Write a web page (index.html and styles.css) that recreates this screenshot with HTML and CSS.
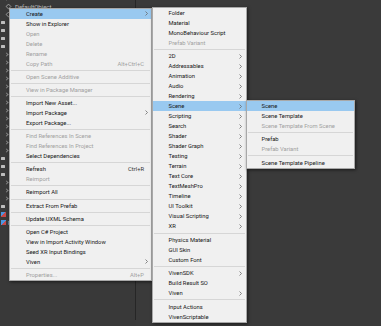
FILE: index.html
```html
<!DOCTYPE html>
<html>
<head>
<meta charset="utf-8">
<link rel="stylesheet" href="styles.css">
</head>
<body>
<div class="screen">
  <div class="tree">
    <div class="row"><span class="chev"></span></div>
    <div class="row"><span class="cube"></span><span class="txt">DefaultObject</span></div>
    <div class="row"><span class="cube"></span></div>
    <div class="row"><span class="folder"></span></div>
    <div class="row"><span class="folder"></span></div>
    <div class="row"><span class="folder"></span></div>
    <div class="row"><span class="folder"></span></div>
    <div class="row"><span class="chev"></span></div>
    <div class="row"><span class="chev"></span></div>
    <div class="row"><span class="chev"></span></div>
    <div class="row"><span class="chev"></span></div>
    <div class="row"><span class="chev"></span></div>
    <div class="row"><span class="chev"></span></div>
    <div class="row"><span class="chev"></span></div>
    <div class="row"><span class="chev"></span></div>
    <div class="row"><span class="chev"></span></div>
    <div class="row"><span class="chev"></span></div>
    <div class="row"><span class="chev"></span></div>
    <div class="row"><span class="chev"></span></div>
    <div class="row"><span class="chev"></span></div>
    <div class="row"><span class="folder"></span></div>
    <div class="row"><span class="folder"></span></div>
    <div class="row"><span class="folder"></span></div>
    <div class="row"><span class="chev"></span></div>
    <div class="row"><span class="chev"></span></div>
    <div class="row"><span class="chev"></span></div>
    <div class="row"><span class="folder"></span></div>
    <div class="row"><span class="pkg"></span></div>
    <div class="row"><span class="pkg"></span><span class="txt clip">Pac</span></div>
  </div>
  <div class="rightpane"></div>

  <div class="menu main">
    <div class="item hl"><span class="label">Create</span><svg class="arrow" viewBox="0 0 3 5"><path d="M0.5 0.5 L2.5 2.5 L0.5 4.5"/></svg></div>
    <div class="item"><span class="label">Show in Explorer</span></div>
    <div class="item dis"><span class="label">Open</span></div>
    <div class="item dis"><span class="label">Delete</span></div>
    <div class="item dis"><span class="label">Rename</span></div>
    <div class="item dis"><span class="label">Copy Path</span><span class="key">Alt+Ctrl+C</span></div>
    <div class="sep"></div>
    <div class="item dis"><span class="label">Open Scene Additive</span></div>
    <div class="sep"></div>
    <div class="item dis"><span class="label">View in Package Manager</span></div>
    <div class="sep"></div>
    <div class="item"><span class="label">Import New Asset...</span></div>
    <div class="item"><span class="label">Import Package</span><svg class="arrow" viewBox="0 0 3 5"><path d="M0.5 0.5 L2.5 2.5 L0.5 4.5"/></svg></div>
    <div class="item"><span class="label">Export Package...</span></div>
    <div class="sep"></div>
    <div class="item dis"><span class="label">Find References In Scene</span></div>
    <div class="item dis"><span class="label">Find References In Project</span></div>
    <div class="item"><span class="label">Select Dependencies</span></div>
    <div class="sep"></div>
    <div class="item"><span class="label">Refresh</span><span class="key">Ctrl+R</span></div>
    <div class="item dis"><span class="label">Reimport</span></div>
    <div class="sep"></div>
    <div class="item"><span class="label">Reimport All</span></div>
    <div class="sep"></div>
    <div class="item"><span class="label">Extract From Prefab</span></div>
    <div class="sep"></div>
    <div class="item"><span class="label">Update UXML Schema</span></div>
    <div class="sep"></div>
    <div class="item"><span class="label">Open C# Project</span></div>
    <div class="item"><span class="label">View in Import Activity Window</span></div>
    <div class="item"><span class="label">Seed XR Input Bindings</span></div>
    <div class="item"><span class="label">Viven</span><svg class="arrow" viewBox="0 0 3 5"><path d="M0.5 0.5 L2.5 2.5 L0.5 4.5"/></svg></div>
    <div class="sep"></div>
    <div class="item dis"><span class="label">Properties...</span><span class="key">Alt+P</span></div>
  </div>

  <div class="menu sub1">
    <div class="item"><span class="label">Folder</span></div>
    <div class="item"><span class="label">Material</span></div>
    <div class="item"><span class="label">MonoBehaviour Script</span></div>
    <div class="item dis"><span class="label">Prefab Variant</span></div>
    <div class="sep"></div>
    <div class="item"><span class="label">2D</span><svg class="arrow" viewBox="0 0 3 5"><path d="M0.5 0.5 L2.5 2.5 L0.5 4.5"/></svg></div>
    <div class="item"><span class="label">Addressables</span><svg class="arrow" viewBox="0 0 3 5"><path d="M0.5 0.5 L2.5 2.5 L0.5 4.5"/></svg></div>
    <div class="item"><span class="label">Animation</span><svg class="arrow" viewBox="0 0 3 5"><path d="M0.5 0.5 L2.5 2.5 L0.5 4.5"/></svg></div>
    <div class="item"><span class="label">Audio</span><svg class="arrow" viewBox="0 0 3 5"><path d="M0.5 0.5 L2.5 2.5 L0.5 4.5"/></svg></div>
    <div class="item"><span class="label">Rendering</span><svg class="arrow" viewBox="0 0 3 5"><path d="M0.5 0.5 L2.5 2.5 L0.5 4.5"/></svg></div>
    <div class="item hl"><span class="label">Scene</span><svg class="arrow" viewBox="0 0 3 5"><path d="M0.5 0.5 L2.5 2.5 L0.5 4.5"/></svg></div>
    <div class="item"><span class="label">Scripting</span><svg class="arrow" viewBox="0 0 3 5"><path d="M0.5 0.5 L2.5 2.5 L0.5 4.5"/></svg></div>
    <div class="item"><span class="label">Search</span><svg class="arrow" viewBox="0 0 3 5"><path d="M0.5 0.5 L2.5 2.5 L0.5 4.5"/></svg></div>
    <div class="item"><span class="label">Shader</span><svg class="arrow" viewBox="0 0 3 5"><path d="M0.5 0.5 L2.5 2.5 L0.5 4.5"/></svg></div>
    <div class="item"><span class="label">Shader Graph</span><svg class="arrow" viewBox="0 0 3 5"><path d="M0.5 0.5 L2.5 2.5 L0.5 4.5"/></svg></div>
    <div class="item"><span class="label">Testing</span><svg class="arrow" viewBox="0 0 3 5"><path d="M0.5 0.5 L2.5 2.5 L0.5 4.5"/></svg></div>
    <div class="item"><span class="label">Terrain</span><svg class="arrow" viewBox="0 0 3 5"><path d="M0.5 0.5 L2.5 2.5 L0.5 4.5"/></svg></div>
    <div class="item"><span class="label">Text Core</span><svg class="arrow" viewBox="0 0 3 5"><path d="M0.5 0.5 L2.5 2.5 L0.5 4.5"/></svg></div>
    <div class="item"><span class="label">TextMeshPro</span><svg class="arrow" viewBox="0 0 3 5"><path d="M0.5 0.5 L2.5 2.5 L0.5 4.5"/></svg></div>
    <div class="item"><span class="label">Timeline</span><svg class="arrow" viewBox="0 0 3 5"><path d="M0.5 0.5 L2.5 2.5 L0.5 4.5"/></svg></div>
    <div class="item"><span class="label">UI Toolkit</span><svg class="arrow" viewBox="0 0 3 5"><path d="M0.5 0.5 L2.5 2.5 L0.5 4.5"/></svg></div>
    <div class="item"><span class="label">Visual Scripting</span><svg class="arrow" viewBox="0 0 3 5"><path d="M0.5 0.5 L2.5 2.5 L0.5 4.5"/></svg></div>
    <div class="item"><span class="label">XR</span><svg class="arrow" viewBox="0 0 3 5"><path d="M0.5 0.5 L2.5 2.5 L0.5 4.5"/></svg></div>
    <div class="sep"></div>
    <div class="item"><span class="label">Physics Material</span></div>
    <div class="item"><span class="label">GUI Skin</span></div>
    <div class="item"><span class="label">Custom Font</span></div>
    <div class="sep"></div>
    <div class="item"><span class="label">VivenSDK</span><svg class="arrow" viewBox="0 0 3 5"><path d="M0.5 0.5 L2.5 2.5 L0.5 4.5"/></svg></div>
    <div class="item"><span class="label">Build Result SO</span></div>
    <div class="item"><span class="label">Viven</span><svg class="arrow" viewBox="0 0 3 5"><path d="M0.5 0.5 L2.5 2.5 L0.5 4.5"/></svg></div>
    <div class="sep"></div>
    <div class="item"><span class="label">Input Actions</span></div>
    <div class="item"><span class="label">VivenScriptable</span></div>
  </div>

  <div class="menu sub2">
    <div class="item hl"><span class="label">Scene</span></div>
    <div class="item"><span class="label">Scene Template</span></div>
    <div class="item dis"><span class="label">Scene Template From Scene</span></div>
    <div class="sep"></div>
    <div class="item"><span class="label">Prefab</span></div>
    <div class="item dis"><span class="label">Prefab Variant</span></div>
    <div class="sep"></div>
    <div class="item"><span class="label">Scene Template Pipeline</span></div>
  </div>
</div>
</body>
</html>
```
FILE: styles.css
```css
html, body {
  margin: 0;
  padding: 0;
}
body {
  background: #383838;
  font-family: Roboto, "Noto Sans", "Noto Sans CJK KR", sans-serif;
}
.screen {
  position: relative;
  width: 381px;
  height: 326px;
  overflow: hidden;
  display: flex;
  background: #393939;
}
.tree {
  width: 136px;
  height: 100%;
  border-right: 1px solid #262626;
  display: flex;
  flex-direction: column;
  margin-top: -6px;
  box-sizing: border-box;
}
.row {
  height: 8px;
  flex: none;
  display: flex;
  align-items: center;
  gap: 2px;
  padding-left: 1px;
  color: #c4c4c4;
  font-size: 6px;
  white-space: nowrap;
}
.row .chev {
  width: 2px;
  height: 2px;
  border-right: 1px solid #8a8a8a;
  border-bottom: 1px solid #8a8a8a;
  transform: rotate(-45deg);
  margin-left: 4px;
}
.row .folder {
  width: 4px;
  height: 3px;
  background: #bdbdbd;
  border-radius: 0.5px;
}
.row .cube {
  width: 3px;
  height: 3px;
  margin-left: 5px;
  border: 1px solid #a8a8a8;
  transform: rotate(45deg) scale(0.85);
}
.row .pkg {
  width: 5px;
  height: 5px;
  background: linear-gradient(135deg, #4a96e0 50%, #c84848 50%);
}
.row .txt {
  margin-left: 2px;
}
.row .txt.clip {
  margin-left: 0;
}
.rightpane {
  flex: 1;
  background: #3a3a3a;
}

.menu {
  position: absolute;
  background: #f0f0f0;
  border: 1px solid #a8a8a8;
  box-shadow: 1px 1px 3px rgba(0, 0, 0, 0.55);
  display: flex;
  flex-direction: column;
  box-sizing: border-box;
  font-size: 5.8px;
  color: #161616;
}
.main {
  left: 9px;
  top: 7.5px;
  width: 143px;
}
.sub1 {
  left: 152px;
  top: 7px;
  width: 95px;
}
.sub2 {
  left: 246px;
  top: 100px;
  width: 109px;
}
.item {
  height: 10px;
  flex: none;
  display: flex;
  align-items: center;
  white-space: nowrap;
  padding-right: 3px;
}
.main .item { padding-left: 16px; }
.sub1 .item { padding-left: 15.5px; padding-right: 4px; }
.sub2 .item { padding-left: 14.5px; }
.item .label {
  flex: 1;
}
.item.hl {
  background: #99c9f0;
}
.item.dis {
  color: #a0a0a0;
}
.key {
  margin-right: 4px;
  color: #333;
}
.item.dis .key {
  color: #a0a0a0;
}
.arrow {
  width: 3px;
  height: 5px;
  fill: none;
  stroke: #6a6a6a;
  stroke-width: 0.8;
}
.sep {
  height: 1px;
  flex: none;
  background: #d6d6d6;
  margin: 1.08px 1px;
}
.sub1 .sep { margin: 1.2px 1px; }
.sub2 .sep { margin: 1.17px 1px; }
```
